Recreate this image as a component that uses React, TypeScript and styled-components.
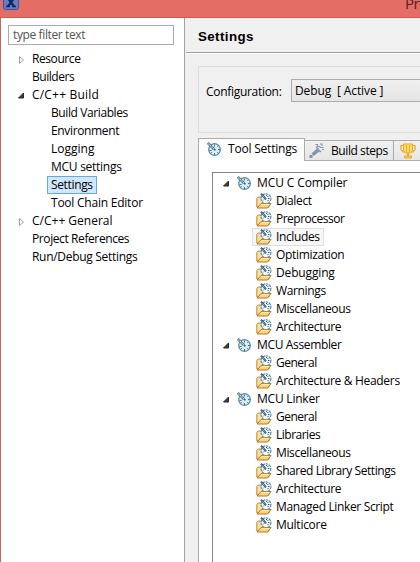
import React from "react";
import styled, { createGlobalStyle, css } from "styled-components";

const GlobalStyle = createGlobalStyle`
  * { box-sizing: border-box; }
  html, body, #root { margin: 0; height: 100%; }
  body {
    overflow: hidden;
    background: #f0f0f0;
    color: #000;
    font: 12px/18px "Open Sans", "Noto Sans", sans-serif;
  }
  svg { display: block; flex: none; }
`;

const Window = styled.div`
  width: 420px;
  height: 562px;
  display: flex;
  flex-direction: column;
  overflow: hidden;
`;
const TitleBar = styled.header`
  height: 18px;
  flex: none;
  display: flex;
  justify-content: space-between;
  background: #e46e66;
  border-bottom: 1px solid #c65c56;
  padding-left: 3px;
  overflow: hidden;
`;
const WindowTitle = styled.span`
  width: 15px;
  white-space: nowrap;
  font-size: 15px;
  line-height: 20px;
  margin-top: -7px;
  letter-spacing: -0.6px;
  color: #4a2422;
`;
const Body = styled.div`
  flex: 1;
  display: flex;
  min-height: 0;
`;
const Sidebar = styled.nav`
  width: 185px;
  flex: none;
  background: #fff;
  border-left: 1px solid #cb625c;
  border-right: 1px solid #a0a0a0;
  padding: 7px 0 0 7px;
`;
const Filter = styled.div`
  width: 166px;
  height: 20px;
  border: 1px solid #ababab;
  padding-left: 4px;
  color: #555;
`;
const NavTree = styled.div`
  padding-top: 5px;
`;
const Row = styled.div<{ $indent: number }>`
  height: 18px;
  display: flex;
  align-items: center;
  padding-left: ${(p) => p.$indent}px;
`;
const Arrow = styled.span`
  width: 10px;
  flex: none;
`;
const Text = styled.span<{ $ls: number }>`
  white-space: pre;
  letter-spacing: ${(p) => p.$ls}px;
`;
const Item = styled.span<{ $state?: "selected" | "hover"; $gap?: number }>`
  height: 18px;
  display: flex;
  align-items: center;
  gap: ${(p) => p.$gap ?? 0}px;
  padding: 0 3px;
  border: 1px solid transparent;
  ${(p) => p.$state === "selected" && css`
    background: #cfe6fc;
    border-color: #66a7e8;
  `}
  ${(p) => p.$state === "hover" && css`
    background: #f7f7f7;
    border-color: #dedede;
  `}
`;
const Main = styled.main`
  flex: 1;
  min-width: 0;
  margin-left: 1px;
  display: flex;
  flex-direction: column;
  background: #f0f0f0;
`;
const PageHeading = styled.h1`
  height: 36px;
  flex: none;
  margin: 0;
  padding: 1px 0 0 12px;
  font: bold 13.33px/36px "Liberation Sans", sans-serif;
  letter-spacing: 0.4px;
  border-bottom: 1px solid #fff;
  box-shadow: inset 0 -1px #a0a0a0;
`;
const ConfigGroup = styled.section`
  height: 67px;
  flex: none;
  margin: 12px 0 0 12px;
  border: 1px solid #dcdcdc;
  border-right: 0;
  display: flex;
  padding: 12px 0 0 7px;
`;
const ConfigLabel = styled.label`
  width: 85px;
  flex: none;
  line-height: 25px;
`;
const Combo = styled.div`
  flex: 1;
  height: 23px;
  border: 1px solid #acacac;
  border-right: 0;
  padding-left: 3px;
  line-height: 22px;
  background: linear-gradient(#f0f0f0, #e5e5e5);
`;
const TabStrip = styled.div`
  height: 23px;
  flex: none;
  margin: 5px 0 0 12px;
  display: flex;
  align-items: flex-end;
`;
const Tab = styled.div<{ $active?: boolean; $width: number; $inset?: number }>`
  width: ${(p) => p.$width}px;
  height: 21px;
  flex: none;
  display: flex;
  align-items: center;
  gap: 6px;
  padding-left: ${(p) => p.$inset ?? 4}px;
  border: 1px solid #acacac;
  border-left: 0;
  background: linear-gradient(#f0f0f0, #e6e6e6);
  ${(p) => p.$active && css`
    height: 23px;
    gap: 7px;
    padding: 0 0 2px 8px;
    border-left: 1px solid #acacac;
    border-bottom: 0;
    background: #fff;
  `}
`;
const TabPage = styled.div`
  flex: 1;
  margin-left: 12px;
  padding: 11px 0 0 13px;
  border-left: 1px solid #acacac;
  background: #fff;
`;
const ToolTree = styled.div`
  height: 100%;
  border: 1px solid #828790;
  border-right: 0;
  border-bottom: 0;
  padding-top: 1px;
`;

const OpenArrow = () => (
  <svg width="10" height="10" viewBox="0 0 10 10">
    <path d="M5.5 3v5h-5z" fill="#404040" stroke="#262626" />
  </svg>
);
const ClosedArrow = () => (
  <svg width="10" height="12" viewBox="0 0 10 12">
    <path d="M1.5 3.5v7l4-3.5z" fill="#fff" stroke="#a0a0a0" />
  </svg>
);
const Dial = () => (
  <svg width="14" height="14" viewBox="0 0 14 14">
    <circle cx="7.5" cy="7.5" r="5.8" fill="#dceef4" stroke="#5b8dab" strokeWidth="1.3" />
    <path d="M7.5 2.5v2M7.5 11v2M2.5 8.5h2M11 7.5h2M3.8 11.2l1-1M10.3 10.3l1 1M10.3 4.7l1-1" stroke="#3b7299" />
    <path d="M.8 1l6.4 6.4" stroke="#4b7087" strokeWidth="2.6" />
    <path d="M1.4 1.6l5.5 5.5" stroke="#e4eef2" strokeWidth="1.1" strokeDasharray="1.4 .8" />
    <path d="M7 7h1.6v1.6H7z" fill="#2e607f" />
  </svg>
);
const ToolFolder = () => (
  <svg width="16" height="16" viewBox="0 0 16 16">
    <path d="M.8 14V5.5L2.2 4H5l1.2 2H13v8z" fill="#f9dfa0" stroke="#c58a34" />
    <circle cx="10" cy="5.7" r="4.9" fill="#f2f8fb" stroke="#3f86b6" strokeWidth="1.1" strokeDasharray="2.5 .7" />
    <path d="M5 .8l5 5.4" stroke="#35566e" strokeWidth="2" />
    <path d="M5.6 1.8L9.6 6" stroke="#eef5f7" strokeWidth=".9" strokeDasharray="1 .9" />
    <path d="M10.5 2v1M13.5 5.5H12M12.5 8l-1-1M7 7.5l1-1M12.4 3l-1 1" stroke="#245878" />
    <path d="M1 15l4-4.5h10L11.5 15z" fill="#fbd483" stroke="#b77720" />
    <path d="M5.5 11.4h7.8" stroke="#fff0be" />
  </svg>
);
const BuildTool = () => (
  <svg width="16" height="16" viewBox="0 0 16 16">
    <path d="M.5 12h3v3h-3zM2.5 10.5L8 5.5l2.5 3-6 4.5zM6.5 4l1.5-.7 4.5 5.4-1.5.8z" fill="#8197a8" />
    <path d="M6.5 1.5h2v2h2l1 1h3M11 1h2v2M13 6.5h2" fill="none" stroke="#8197a8" strokeWidth="1.1" />
    <path d="M8.5 4.5l3 3.5" stroke="#e8edf0" strokeDasharray="1 1" />
  </svg>
);
const Trophy = () => (
  <svg width="16" height="16" viewBox="0 0 16 16">
    <path d="M3.5 2.5H1v4l2 2.5h2M12.5 2.5H15v4L13 9h-2" fill="none" stroke="#eca51e" strokeWidth="1.2" />
    <path d="M3.5 1h9v6.5l-2 2.5h-5l-2-2.5z" fill="#ffda69" stroke="#eca51e" />
    <path d="M6.5 2v7M9.5 2v7" stroke="#efae27" />
    <path d="M7 10h2v3H7z" fill="#eca51e" />
    <path d="M4.5 13h7v2h-7z" fill="#ffd15b" stroke="#eca51e" />
  </svg>
);
const AppIcon = () => (
  <svg width="17" height="11" viewBox="0 0 17 11">
    <path d="M.5-3.5h15v11q0 2-2 2h-11q-2 0-2-2z" fill="#627fcb" stroke="#3952a5" />
    <path d="M5-2l6 8.5M11-2L5 6.5" stroke="#15295f" strokeWidth="2.4" />
    <path d="M3 6.5h4M9 6.5h4" stroke="#15295f" strokeWidth="1.3" />
  </svg>
);

type NavEntry = { label: string; ls: number; child?: boolean; arrow?: "open" | "closed"; selected?: boolean };
const navEntries: NavEntry[] = [
  { label: "Resource", ls: -0.42, arrow: "closed" },
  { label: "Builders", ls: -0.45 },
  { label: "C/C++ Build", ls: 0.2, arrow: "open" },
  { label: "Build Variables", ls: -0.4, child: true },
  { label: "Environment", ls: -0.35, child: true },
  { label: "Logging", ls: 0, child: true },
  { label: "MCU settings", ls: -0.27, child: true },
  { label: "Settings", ls: -0.35, child: true, selected: true },
  { label: "Tool Chain Editor", ls: -0.23, child: true },
  { label: "C/C++ General", ls: 0, arrow: "closed" },
  { label: "Project References", ls: -0.4 },
  { label: "Run/Debug Settings", ls: -0.3 },
];

type ToolEntry = { label: string; ls: number; root?: boolean; hover?: boolean };
const toolEntries: ToolEntry[] = [
  { label: "MCU C Compiler", ls: -0.1, root: true },
  { label: "Dialect", ls: -0.35 },
  { label: "Preprocessor", ls: -0.5 },
  { label: "Includes", ls: -0.38, hover: true },
  { label: "Optimization", ls: -0.33 },
  { label: "Debugging", ls: -0.15 },
  { label: "Warnings", ls: -0.35 },
  { label: "Miscellaneous", ls: -0.35 },
  { label: "Architecture", ls: -0.28 },
  { label: "MCU Assembler", ls: -0.35, root: true },
  { label: "General", ls: -0.5 },
  { label: "Architecture & Headers", ls: -0.31 },
  { label: "MCU Linker", ls: -0.22, root: true },
  { label: "General", ls: -0.5 },
  { label: "Libraries", ls: -0.5 },
  { label: "Miscellaneous", ls: -0.35 },
  { label: "Shared Library Settings", ls: -0.43 },
  { label: "Architecture", ls: -0.28 },
  { label: "Managed Linker Script", ls: -0.35 },
  { label: "Multicore", ls: -0.27 },
];

export default function App() {
  return (
    <Window>
      <GlobalStyle />
      <TitleBar>
        <AppIcon />
        <WindowTitle>Properties</WindowTitle>
      </TitleBar>
      <Body>
        <Sidebar>
          <Filter><Text $ls={-0.38}>type filter text</Text></Filter>
          <NavTree>
            {navEntries.map((e) => (
              <Row key={e.label} $indent={e.child ? 39 : e.arrow ? 10 : 20}>
                {e.arrow && <Arrow>{e.arrow === "open" ? <OpenArrow /> : <ClosedArrow />}</Arrow>}
                <Item $state={e.selected ? "selected" : undefined}>
                  <Text $ls={e.ls}>{e.label}</Text>
                </Item>
              </Row>
            ))}
          </NavTree>
        </Sidebar>
        <Main>
          <PageHeading>Settings</PageHeading>
          <ConfigGroup>
            <ConfigLabel><Text $ls={-0.3}>Configuration:</Text></ConfigLabel>
            <Combo><Text $ls={-0.12}>{"Debug  [ Active ]"}</Text></Combo>
          </ConfigGroup>
          <TabStrip>
            <Tab $active $width={107}><Dial /><Text $ls={-0.2}>Tool Settings</Text></Tab>
            <Tab $width={89}><BuildTool /><Text $ls={-0.42}>Build steps</Text></Tab>
            <Tab $width={90} $inset={6}><Trophy /></Tab>
          </TabStrip>
          <TabPage>
            <ToolTree>
              {toolEntries.map((e, i) => (
                <Row key={i} $indent={e.root ? 10 : 39}>
                  {e.root && <Arrow><OpenArrow /></Arrow>}
                  <Item $state={e.hover ? "hover" : undefined} $gap={e.root ? 6 : 4}>
                    {e.root ? <Dial /> : <ToolFolder />}
                    <Text $ls={e.ls}>{e.label}</Text>
                  </Item>
                </Row>
              ))}
            </ToolTree>
          </TabPage>
        </Main>
      </Body>
    </Window>
  );
}
